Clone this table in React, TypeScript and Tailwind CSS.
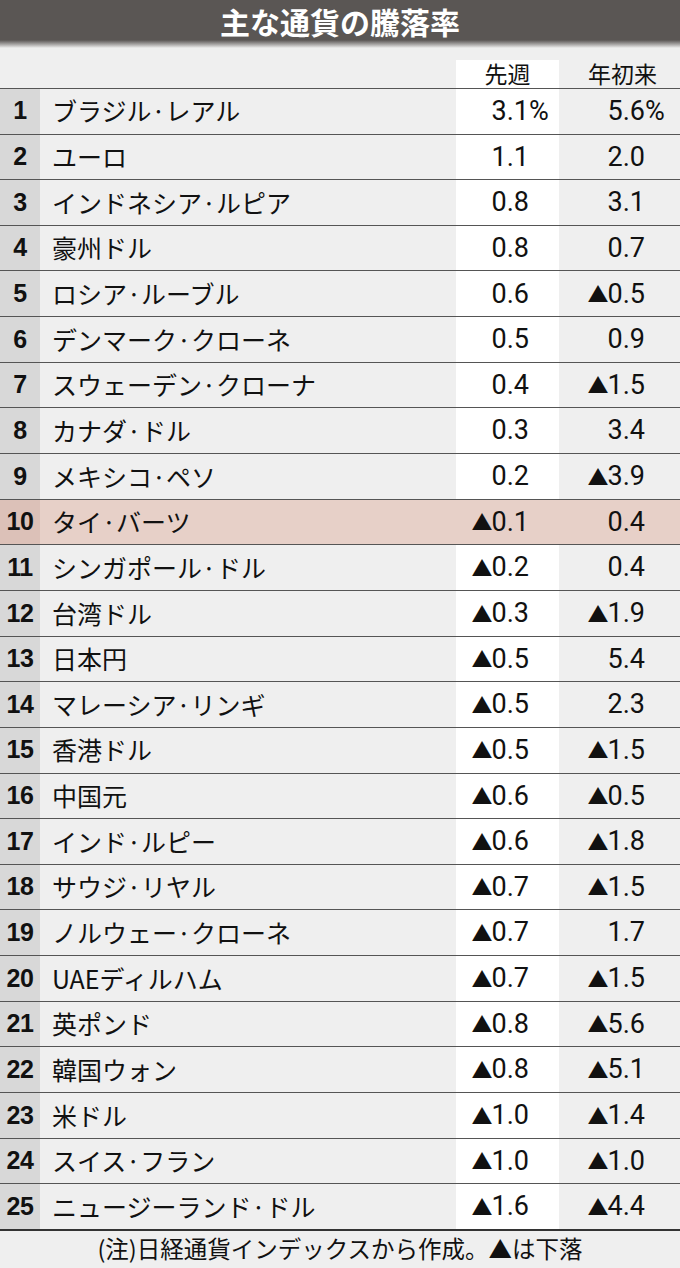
import React from "react";

type Row = { name: string; week: string; ytd: string };

const rows: Row[] = [
  { name: "ブラジル·レアル", week: "3.1", ytd: "5.6" },
  { name: "ユーロ", week: "1.1", ytd: "2.0" },
  { name: "インドネシア·ルピア", week: "0.8", ytd: "3.1" },
  { name: "豪州ドル", week: "0.8", ytd: "0.7" },
  { name: "ロシア·ルーブル", week: "0.6", ytd: "-0.5" },
  { name: "デンマーク·クローネ", week: "0.5", ytd: "0.9" },
  { name: "スウェーデン·クローナ", week: "0.4", ytd: "-1.5" },
  { name: "カナダ·ドル", week: "0.3", ytd: "3.4" },
  { name: "メキシコ·ペソ", week: "0.2", ytd: "-3.9" },
  { name: "タイ·バーツ", week: "-0.1", ytd: "0.4" },
  { name: "シンガポール·ドル", week: "-0.2", ytd: "0.4" },
  { name: "台湾ドル", week: "-0.3", ytd: "-1.9" },
  { name: "日本円", week: "-0.5", ytd: "5.4" },
  { name: "マレーシア·リンギ", week: "-0.5", ytd: "2.3" },
  { name: "香港ドル", week: "-0.5", ytd: "-1.5" },
  { name: "中国元", week: "-0.6", ytd: "-0.5" },
  { name: "インド·ルピー", week: "-0.6", ytd: "-1.8" },
  { name: "サウジ·リヤル", week: "-0.7", ytd: "-1.5" },
  { name: "ノルウェー·クローネ", week: "-0.7", ytd: "1.7" },
  { name: "UAEディルハム", week: "-0.7", ytd: "-1.5" },
  { name: "英ポンド", week: "-0.8", ytd: "-5.6" },
  { name: "韓国ウォン", week: "-0.8", ytd: "-5.1" },
  { name: "米ドル", week: "-1.0", ytd: "-1.4" },
  { name: "スイス·フラン", week: "-1.0", ytd: "-1.0" },
  { name: "ニュージーランド·ドル", week: "-1.6", ytd: "-4.4" },
];

function Value({ v, pct }: { v: string; pct?: boolean }) {
  const down = v.startsWith("-");
  const num = down ? v.slice(1) : v;
  return (
    <span className="relative inline-flex items-center">
      {down && <span className="mr-[-1px] text-[21px] font-['Noto_Sans_CJK_JP',sans-serif]">▲</span>}
      <span>{num}</span>
      {pct && <span className="absolute left-full">%</span>}
    </span>
  );
}

export default function App() {
  return (
    <div className="flex h-[1268px] w-[680px] flex-col bg-[#efefef] font-['Noto_Sans_CJK_JP',sans-serif] text-[#111]">
      <div className="flex h-[40px] items-center justify-center bg-[#5a5654] pt-[2px] text-[30px] font-bold leading-none text-white">
        主な通貨の騰落率
      </div>
      <div className="h-[8px] bg-linear-to-b from-[#5a5654] to-[#efefef]" />
      <div className="flex h-[40px] text-[23px] leading-none">
        <div className="flex-1" />
        <div className="mt-[12px] flex w-[103px] items-center justify-center bg-white">先週</div>
        <div className="mt-[12px] flex w-[121px] items-center justify-center pl-[6px]">年初来</div>
      </div>
      {rows.map((r, i) => {
        const hl = i === 9;
        return (
          <div
            key={r.name}
            className={`flex h-[45.7px] border-t-[1.5px] border-[#555] ${hl ? "bg-[#e7d0c8]" : ""}`}
          >
            <div
              className={`flex w-[40px] items-center justify-center font-['Liberation_Sans',sans-serif] text-[25px] font-bold tracking-[-0.5px] ${
                hl ? "bg-[#dcc1b8]" : "bg-[#d8d8d8]"
              }`}
            >
              {i + 1}
            </div>
            <div className="flex flex-1 items-center whitespace-nowrap pl-[12px] text-[25px]">{r.name}</div>
            <div
              className={`flex w-[103px] items-center justify-end pr-[30px] font-['Roboto',sans-serif] text-[27px] ${
                hl ? "" : "bg-white"
              }`}
            >
              <Value v={r.week} pct={i === 0} />
            </div>
            <div className="flex w-[121px] items-center justify-end pr-[35px] font-['Roboto',sans-serif] text-[27px]">
              <Value v={r.ytd} pct={i === 0} />
            </div>
          </div>
        );
      })}
      <div className="flex flex-1 items-center justify-center border-t-2 border-[#333] pb-[2px] text-[23.5px]">
        (注)日経通貨インデックスから作成。▲は下落
      </div>
    </div>
  );
}
